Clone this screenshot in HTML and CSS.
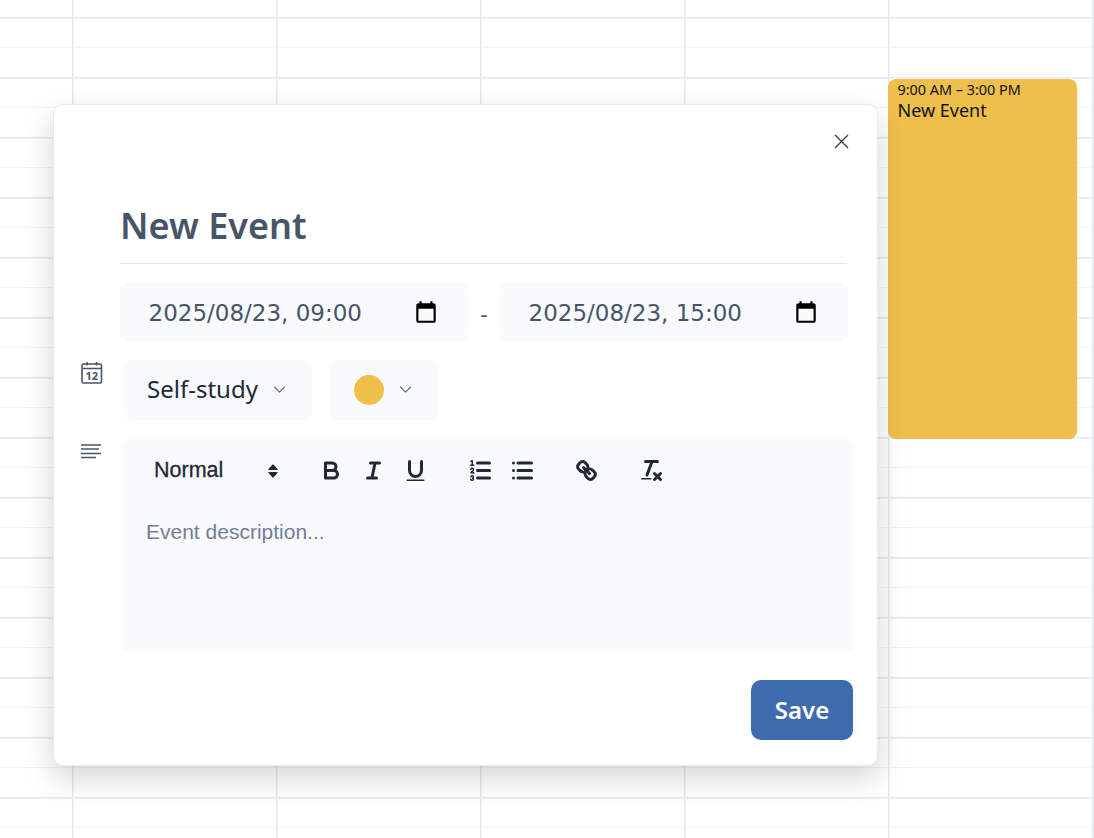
FILE: index.html
```html
<!DOCTYPE html>
<html lang="en">
<head>
<meta charset="utf-8">
<title>New Event</title>
<link rel="stylesheet" href="styles.css">
</head>
<body>
<div class="calendar">
  <div class="day"></div>
  <div class="day"></div>
  <div class="day"></div>
  <div class="day"></div>
  <div class="day day-last">
    <div class="event">
      <div class="event-time">9:00 AM – 3:00 PM</div>
      <div class="event-title">New Event</div>
    </div>
  </div>
</div>

<div class="modal">
  <div class="modal-top">
    <button class="close" aria-label="Close">
      <svg viewBox="0 0 16 16" width="16" height="16"><path d="M2 2L15 15M15 2L2 15"/></svg>
    </button>
  </div>

  <div class="title">New Event</div>

  <div class="dates">
    <div class="date-field">
      <span class="date-text">2025/08/23, 09:00</span>
      <svg class="date-icon" viewBox="0 0 24 24"><path d="M19 4h-1V2h-2v2H8V2H6v2H5c-1.100 0-2 .9-2 2v14c0 1.100.9 2 2 2h14c1.100 0 2-.9 2-2V6c0-1.100-.9-2-2-2zm0 16H5V9h14v11z"/></svg>
    </div>
    <span class="dash">-</span>
    <div class="date-field">
      <span class="date-text">2025/08/23, 15:00</span>
      <svg class="date-icon" viewBox="0 0 24 24"><path d="M19 4h-1V2h-2v2H8V2H6v2H5c-1.100 0-2 .9-2 2v14c0 1.100.9 2 2 2h14c1.100 0 2-.9 2-2V6c0-1.100-.9-2-2-2zm0 16H5V9h14v11z"/></svg>
    </div>
  </div>

  <div class="row row-select">
    <svg class="side-icon side-cal" viewBox="0 0 22 23">
      <rect x="1" y="3" width="19.500" height="19" rx="1.500"/>
      <path d="M1 7.500H20.500M6 1V4.500M15.500 1V4.500"/>
      <text x="10.750" y="18.800" class="cal-num">12</text>
    </svg>
    <div class="select">
      <span class="select-label">Self-study</span>
      <svg class="chev" viewBox="0 0 14 8"><path d="M1 1L7 7L13 1"/></svg>
    </div>
    <div class="select select-color">
      <span class="swatch"></span>
      <svg class="chev" viewBox="0 0 14 8"><path d="M1 1L7 7L13 1"/></svg>
    </div>
  </div>

  <div class="row row-editor">
    <svg class="side-icon side-lines" viewBox="0 0 22 15"><path d="M0 1H20M0 5H18M0 9.500H20M0 13.500H15"/></svg>
    <div class="editor">
      <div class="toolbar">
        <div class="picker">
          <span class="picker-label">Normal</span>
          <svg viewBox="0 0 10 14" class="picker-arrows"><path d="M5 1L9 5.500H1ZM5 13L1 8.500H9Z"/></svg>
        </div>
        <div class="group">
          <svg class="tool" viewBox="0 0 18 18"><path d="M5,4H9.500A2.500,2.500,0,0,1,12,6.500v0A2.500,2.500,0,0,1,9.500,9H5A0,0,0,0,1,5,9V4A0,0,0,0,1,5,4Z"/><path d="M5,9h5.500A2.500,2.500,0,0,1,13,11.500v0A2.500,2.500,0,0,1,10.500,14H5a0,0,0,0,1,0,0V9A0,0,0,0,1,5,9Z"/></svg>
          <svg class="tool" viewBox="0 0 18 18"><path d="M7 4H13M5 14H11M8 14L10 4"/></svg>
          <svg class="tool" viewBox="0 0 18 18"><path d="M5,3V9a4.012,4.012,0,0,0,4,4H9a4.012,4.012,0,0,0,4-4V3"/><rect class="fill" height="1" rx=".5" ry=".5" width="12" x="3" y="15"/></svg>
        </div>
        <div class="group">
          <svg class="tool" viewBox="0 0 18 18"><path d="M7 4H15M7 9H15M7 14H15"/><path class="thin" d="M2.500 5.500H4.500"/><path class="fill" d="M3.500,6A0.500,0.500,0,0,1,3,5.500V3.085l-0.276.138A0.500,0.500,0,0,1,2.053,3c-0.124-.247-0.023-0.324.224-0.447l1-.5A0.500,0.500,0,0,1,4,2.500v3A0.500,0.500,0,0,1,3.500,6Z"/><path class="thin" d="M4.500,10.500h-2c0-.234,1.850-1.076,1.850-2.234A0.959,0.959,0,0,0,2.500,8.156"/><path class="thin" d="M2.500,14.846a0.959,0.959,0,0,0,1.850-.109A0.700,0.700,0,0,0,3.750,14a0.688,0.688,0,0,0,.6-0.736,0.959,0.959,0,0,0-1.850-.109"/></svg>
          <svg class="tool" viewBox="0 0 18 18"><path d="M6 4H15M6 9H15M6 14H15M3 4H3M3 9H3M3 14H3"/></svg>
        </div>
        <div class="group">
          <svg class="tool" viewBox="0 0 18 18"><path d="M7 7L11 11"/><path d="M8.900,4.577a3.476,3.476,0,0,1,.36,4.679A3.476,3.476,0,0,1,4.577,8.900C3.185,7.500,2.035,6.400,4.217,4.217S7.500,3.185,8.900,4.577Z"/><path d="M13.423,9.100a3.476,3.476,0,0,0-4.679-.36,3.476,3.476,0,0,0,.36,4.679c1.392,1.392,2.500,2.542,4.679.36S14.815,10.500,13.423,9.100Z"/></svg>
        </div>
        <div class="group">
          <svg class="tool" viewBox="0 0 18 18"><path d="M5 3H13M6 12L9.350 3M11 11L15 15M15 11L11 15"/><rect class="fill" height="1" rx=".5" ry=".5" width="7" x="2" y="14"/></svg>
        </div>
      </div>
      <div class="placeholder">Event description...</div>
    </div>
  </div>

  <div class="actions">
    <button class="save">Save</button>
  </div>
</div>
</body>
</html>
```

FILE: styles.css
```css
* { box-sizing: border-box; }

html, body {
  margin: 0;
  height: 100%;
  overflow: hidden;
  background: #fff;
  font-family: "Noto Sans", sans-serif;
}

.calendar {
  display: flex;
  height: 838px;
  padding-left: 72px;
  background-image:
    repeating-linear-gradient(to bottom,
      transparent 0, transparent 17px, #e2e8f0 17px, #e2e8f0 18px,
      #f0f3f8 18px, #f0f3f8 19px,
      transparent 19px, transparent 47px, #f1f3f6 47px, #f1f3f6 48px,
      transparent 48px, transparent 60px);
}

.day {
  position: relative;
  flex: 0 0 204px;
  border-left: 1px solid #e2e8f0;
  box-shadow: inset 1px 0 0 #f0f3f8;
}

.day-last {
  flex-basis: 206px;
  border-right: 2px solid #e6ebf2;
}

.event {
  position: absolute;
  top: 79px;
  left: -1px;
  width: 189px;
  height: 360px;
  padding: 1px 9.500px;
  background: #eebf4b;
  border-radius: 8px;
  color: #111;
}

.event-time { font-size: 14.400px; line-height: 20px; }
.event-title { font-size: 18px; line-height: 20px; }

.modal {
  position: absolute;
  top: 104px;
  left: 53px;
  width: 825px;
  height: 662px;
  padding: 0 24px 0 27px;
  background: #fff;
  border: 1px solid #e6e9f0;
  border-radius: 10px;
  box-shadow: 0 12px 30px rgba(0, 0, 0, 0.17);
}

.modal-top {
  display: flex;
  justify-content: flex-end;
  height: 98px;
  padding-top: 28px;
}

.close {
  width: 16px;
  height: 16px;
  margin-right: 4px;
  padding: 0;
  background: none;
  border: 0;
}

.close svg { display: block; fill: none; stroke: #374151; stroke-width: 1.400; }

.title {
  height: 61px;
  margin-left: 39px;
  margin-right: 6px;
  border-bottom: 1px solid #e2e8f0;
  font-size: 36px;
  font-weight: 600;
  line-height: 46px;
  color: #475569;
}

.dates {
  display: flex;
  align-items: center;
  height: 60px;
  margin: 18px 0 0 39px;
}

.date-field {
  display: flex;
  align-items: center;
  justify-content: space-between;
  width: 348px;
  height: 60px;
  padding: 0 29px 0 28.500px;
  background: #f8fafc;
  border-radius: 10px;
  font-family: "DejaVu Sans", sans-serif;
  font-size: 23px;
  color: #475569;
}

.date-text { padding-top: 2px; }

.date-icon { width: 26px; height: 26px; fill: #000; }

.dash {
  width: 32px;
  padding-top: 1px;
  text-align: center;
  font-size: 22px;
  color: #475569;
}

.row {
  position: relative;
  display: flex;
  margin-top: 18px;
  padding-left: 42px;
}

.side-icon {
  position: absolute;
  left: 0;
  fill: none;
  stroke: #475569;
}

.side-cal { top: 1px; width: 22px; height: 23px; stroke-width: 1.600; }
.side-lines { top: 6px; width: 22px; height: 15px; stroke-width: 1.400; }

.cal-num {
  font-family: "Noto Sans", sans-serif;
  font-size: 11px;
  font-weight: 700;
  text-anchor: middle;
  fill: #475569;
  stroke: none;
}

.select {
  display: flex;
  align-items: center;
  width: 189px;
  height: 60px;
  padding-left: 24px;
  background: #f8fafc;
  border-radius: 10px;
  font-size: 24px;
  color: #1f2937;
}

.select-label { padding-bottom: 4px; }

.select-color {
  width: 108px;
  margin-left: 18px;
}

.chev {
  width: 13px;
  height: 7px;
  margin-left: 15px;
  margin-bottom: 1px;
  fill: none;
  stroke: #475569;
  stroke-width: 1.200;
}

.swatch {
  width: 30px;
  height: 30px;
  border-radius: 50%;
  background: #eebf4b;
}

.editor {
  width: 730px;
  height: 212px;
  background: #f8fafc;
  border-radius: 10px 10px 0 0;
}

.toolbar {
  display: flex;
  align-items: center;
  height: 64px;
  padding-left: 31px;
}

.picker {
  display: flex;
  align-items: center;
  justify-content: space-between;
  width: 124px;
  margin-right: 40px;
  font-family: "Liberation Sans", sans-serif;
  font-size: 21.500px;
  color: #1f2937;
  -webkit-text-stroke: 0.3px #1f2937;
}

.picker-arrows {
  width: 10px;
  height: 14px;
  margin-top: 1px;
  fill: #1f2937;
  stroke: #1f2937;
  stroke-width: 1.200;
  stroke-linejoin: round;
}

.group {
  display: flex;
  gap: 15px;
  margin-right: 37.500px;
}

.tool {
  width: 27px;
  height: 27px;
  fill: none;
  stroke: #1f2937;
  stroke-width: 2;
  stroke-linecap: round;
  stroke-linejoin: round;
}

.tool .thin { stroke-width: 1; }
.tool .fill { fill: #1f2937; stroke: none; }

.placeholder {
  padding: 18px 23px;
  font-family: "Liberation Sans", sans-serif;
  font-size: 21px;
  color: #718096;
}

.actions {
  display: flex;
  justify-content: flex-end;
  margin-top: 30px;
}

.save {
  width: 102px;
  height: 60px;
  padding: 0 0 2px;
  background: #3e6bad;
  border: 0;
  border-radius: 10px;
  font-family: "Noto Sans", sans-serif;
  font-size: 24px;
  font-weight: 600;
  color: #fff;
}
```
